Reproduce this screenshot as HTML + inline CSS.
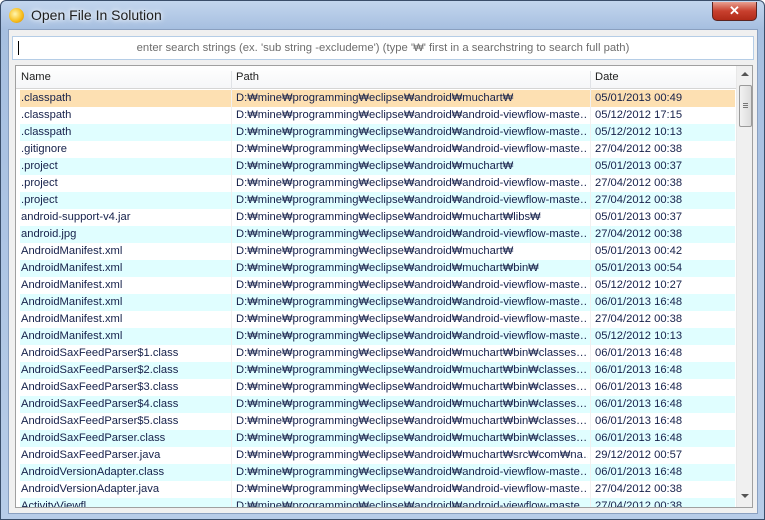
<!DOCTYPE html>
<html><head><meta charset="utf-8"><style>
*{margin:0;padding:0;box-sizing:border-box}
body{width:765px;height:520px;overflow:hidden;font-family:"Liberation Sans","Noto Sans CJK KR",sans-serif;font-size:12px;background:#fff}
.win{position:absolute;left:0;top:0;width:765px;height:520px;border:1px solid #3a4e6a;border-radius:6px 6px 0 0;background:linear-gradient(180deg,#c3d6ee 0,#a6bfe0 28px,#b7cce8 100%)}
.title{position:absolute;left:30px;top:6px;font-size:14px;color:#1e1e1e;text-shadow:0 0 8px #fff,0 0 4px #fff}
.icon{position:absolute;left:8px;top:7px;width:15px;height:15px;border-radius:50%;background:radial-gradient(circle at 40% 40%,#fff6b0,#f8c020 55%,#d08000)}
.close{position:absolute;left:711px;top:1px;width:45px;height:19px;border:1px solid #5a2420;border-top:none;border-radius:0 0 5px 5px;background:linear-gradient(180deg,#e8a090,#c8402e 50%,#b02a18);color:#fff;font-weight:bold;font-size:13px;text-align:center;line-height:18px}
.client{position:absolute;left:7px;top:28px;width:750px;height:485px;background:#f0f0f0;border:1px solid #8aa0c0}
.search{position:absolute;left:3px;top:6px;width:742px;height:24px;background:#fff;border:1px solid #b5cde6;color:#6d6d6d;text-align:center;line-height:22px;font-size:11.3px}
.caret{position:absolute;left:5px;top:4px;width:1px;height:14px;background:#000}
.list{position:absolute;left:6px;top:35px;width:738px;height:443px;background:#fff;border:1px solid #a0a0a0;overflow:hidden;font-size:11.2px}
.hdr{position:absolute;left:0;top:0;width:720px;height:23px;background:linear-gradient(#fff,#f5f6f8);border-bottom:1px solid #d5d5d5}
.hdr div{position:absolute;top:5px;color:#1e1e1e}
.hsep{position:absolute;top:0;width:1px;height:23px;background:#e0e2e6}
.row{position:absolute;left:4px;width:715px;height:17px;color:#15204a}
.row span{position:absolute;top:2px;white-space:nowrap;overflow:hidden}
.c{background:#e0feff}
.sel{background:#fde0b2}
.vl{position:absolute;top:23px;width:1px;height:420px;background:#f0f0f0}
.sb{position:absolute;left:720px;top:0;width:17px;height:443px;background:#f0f0f0;border-left:1px solid #e8e8e8}
.thumb{position:absolute;left:2px;top:19px;width:13px;height:42px;border:1px solid #9a9a9a;border-radius:2px;background:linear-gradient(90deg,#f2f2f2,#dcdcdc)}
</style></head><body>
<div class="win">
<div class="icon"></div>
<div class="title">Open File In Solution</div>
<div class="close">✕</div>
<div class="client">
<div class="search"><div class="caret"></div>enter search strings (ex. 'sub string -excludeme') (type '₩' first in a searchstring to search full path)</div>
<div class="list">
<div class="hdr"><div style="left:5px">Name</div><div style="left:220px">Path</div><div style="left:579px">Date</div><div class="hsep" style="left:215px"></div><div class="hsep" style="left:574px"></div></div>
<div id="rows"></div>
<div class="sb"><div style="position:absolute;left:4px;top:6px;width:0;height:0;border-left:4px solid transparent;border-right:4px solid transparent;border-bottom:4px solid #555"></div><div class="thumb"><div style="position:absolute;left:3px;top:17px;width:5px;height:1px;background:#777;box-shadow:0 2px #777,0 4px #777"></div></div><div style="position:absolute;left:4px;top:428px;width:0;height:0;border-left:4px solid transparent;border-right:4px solid transparent;border-top:4px solid #555"></div></div>
</div>
</div>
</div>
<script>
var P='D:₩mine₩programming₩eclipse₩android₩';
var V=P+'android-viewflow-maste…';
var data=[
['.classpath',P+'muchart₩','05/01/2013 00:49'],
['.classpath',V,'05/12/2012 17:15'],
['.classpath',V,'05/12/2012 10:13'],
['.gitignore',V,'27/04/2012 00:38'],
['.project',P+'muchart₩','05/01/2013 00:37'],
['.project',V,'27/04/2012 00:38'],
['.project',V,'27/04/2012 00:38'],
['android-support-v4.jar',P+'muchart₩libs₩','05/01/2013 00:37'],
['android.jpg',V,'27/04/2012 00:38'],
['AndroidManifest.xml',P+'muchart₩','05/01/2013 00:42'],
['AndroidManifest.xml',P+'muchart₩bin₩','05/01/2013 00:54'],
['AndroidManifest.xml',V,'05/12/2012 10:27'],
['AndroidManifest.xml',V,'06/01/2013 16:48'],
['AndroidManifest.xml',V,'27/04/2012 00:38'],
['AndroidManifest.xml',V,'05/12/2012 10:13'],
['AndroidSaxFeedParser$1.class',P+'muchart₩bin₩classes…','06/01/2013 16:48'],
['AndroidSaxFeedParser$2.class',P+'muchart₩bin₩classes…','06/01/2013 16:48'],
['AndroidSaxFeedParser$3.class',P+'muchart₩bin₩classes…','06/01/2013 16:48'],
['AndroidSaxFeedParser$4.class',P+'muchart₩bin₩classes…','06/01/2013 16:48'],
['AndroidSaxFeedParser$5.class',P+'muchart₩bin₩classes…','06/01/2013 16:48'],
['AndroidSaxFeedParser.class',P+'muchart₩bin₩classes…','06/01/2013 16:48'],
['AndroidSaxFeedParser.java',P+'muchart₩src₩com₩na…','29/12/2012 00:57'],
['AndroidVersionAdapter.class',V,'06/01/2013 16:48'],
['AndroidVersionAdapter.java',V,'27/04/2012 00:38'],
['ActivityViewfl…',V,'27/04/2012 00:38']];
var h='';
data.forEach(function(d,i){
var cls=i==0?'row sel':(i%2==0?'row c':'row');
h+='<div class="'+cls+'" style="top:'+(24+i*17)+'px"><span style="left:1px;width:210px">'+d[0]+'</span><span style="left:216px;width:352px">'+d[1]+'</span><span style="left:575px;width:140px">'+d[2]+'</span></div>';
});
h+='<div class="vl" style="left:215px"></div><div class="vl" style="left:574px"></div>';
document.getElementById('rows').innerHTML=h;
</script>
</body></html>
